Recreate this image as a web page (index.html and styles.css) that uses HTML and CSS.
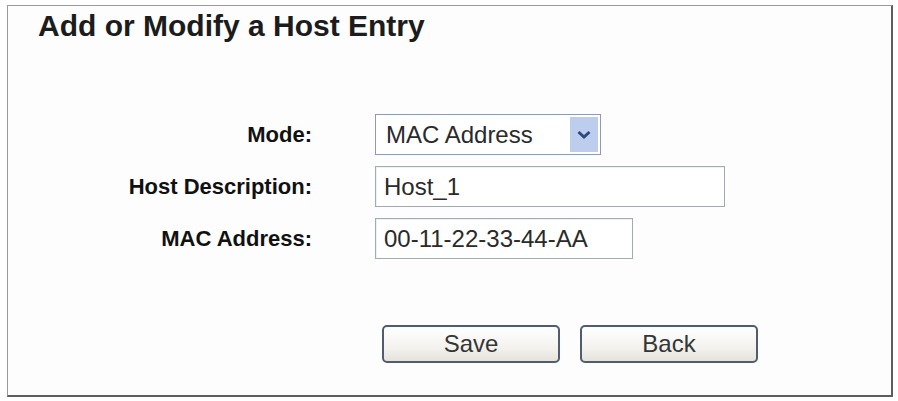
FILE: index.html
```html
<!DOCTYPE html>
<html lang="en">
<head>
    <meta charset="UTF-8">
    <title>Add or Modify a Host Entry</title>
    <link rel="stylesheet" href="styles.css">
</head>
<body>
    <div class="panel">
        <h1 class="panel-title">Add or Modify a Host Entry</h1>
        <form class="host-form">
            <label class="field-label" for="mode">Mode:</label>
            <div class="select-wrap">
                <select id="mode" class="field-select">
                    <option>MAC Address</option>
                    <option>IP Address</option>
                </select>
                <span class="select-arrow">
                    <svg width="16" height="10" viewBox="0 0 16 10">
                        <path d="M2.5 2 L8 7 L13.5 2" fill="none" stroke="#2d4a80" stroke-width="3"/>
                    </svg>
                </span>
            </div>

            <label class="field-label" for="host-desc">Host Description:</label>
            <input id="host-desc" class="field-input input-wide" type="text" value="Host_1">

            <label class="field-label" for="mac">MAC Address:</label>
            <input id="mac" class="field-input input-mac" type="text" value="00-11-22-33-44-AA">

            <div class="button-row">
                <button type="button" class="btn">Save</button>
                <button type="button" class="btn">Back</button>
            </div>
        </form>
    </div>
</body>
</html>
```

FILE: styles.css
```css
* {
    margin: 0;
    padding: 0;
    box-sizing: border-box;
}
body {
    font-family: "Liberation Sans", Arial, sans-serif;
    background-color: #fff;
    color: #222;
    padding: 5px 5px 4px 7px;
    height: 401px;
}
.panel {
    height: 100%;
    border-top: 1px solid #9a9a9a;
    border-left: 1px solid #9a9a9a;
    border-right: 2px solid #5e5e5e;
    border-bottom: 2px solid #5e5e5e;
    background-color: #fdfdfd;
}
.panel-title {
    font-size: 30px;
    line-height: 34px;
    font-weight: bold;
    color: #1c1c1c;
    margin-top: 3px;
    padding-left: 30px;
}
.host-form {
    display: grid;
    grid-template-columns: 304px auto;
    column-gap: 63px;
    row-gap: 11px;
    margin-top: 71px;
    align-items: center;
}
.field-label {
    font-size: 22px;
    font-weight: bold;
    text-align: right;
    color: #111;
}
.select-wrap {
    position: relative;
    width: 226px;
    height: 41px;
}
.field-select {
    appearance: none;
    -webkit-appearance: none;
    width: 100%;
    height: 100%;
    border: 1px solid #8e9bb0;
    background-color: #fff;
    font-family: "Liberation Sans", Arial, sans-serif;
    font-size: 24px;
    color: #2a2a2a;
    padding-left: 10px;
    border-radius: 0;
}
.select-arrow {
    position: absolute;
    top: 3px;
    right: 3px;
    width: 28px;
    height: 35px;
    background-color: #bccdee;
    display: flex;
    align-items: center;
    justify-content: center;
    pointer-events: none;
}
.field-input {
    height: 41px;
    border: 1px solid #a4aab3;
    background-color: #fff;
    font-family: "Liberation Sans", Arial, sans-serif;
    font-size: 24px;
    color: #2a2a2a;
    padding-left: 8px;
    box-shadow: inset 1px 1px 0 #eef0f3;
}
.input-wide {
    width: 350px;
}
.input-mac {
    width: 258px;
}
.button-row {
    grid-column: 2;
    display: flex;
    gap: 20px;
    margin-top: 55px;
    margin-left: 7px;
}
.btn {
    width: 178px;
    height: 38px;
    border: 2px solid #4f5d6e;
    border-radius: 5px;
    background: linear-gradient(#ffffff, #f3f2ee 60%, #e4e3dd);
    font-family: "Liberation Sans", Arial, sans-serif;
    font-size: 24px;
    color: #353535;
}
```
